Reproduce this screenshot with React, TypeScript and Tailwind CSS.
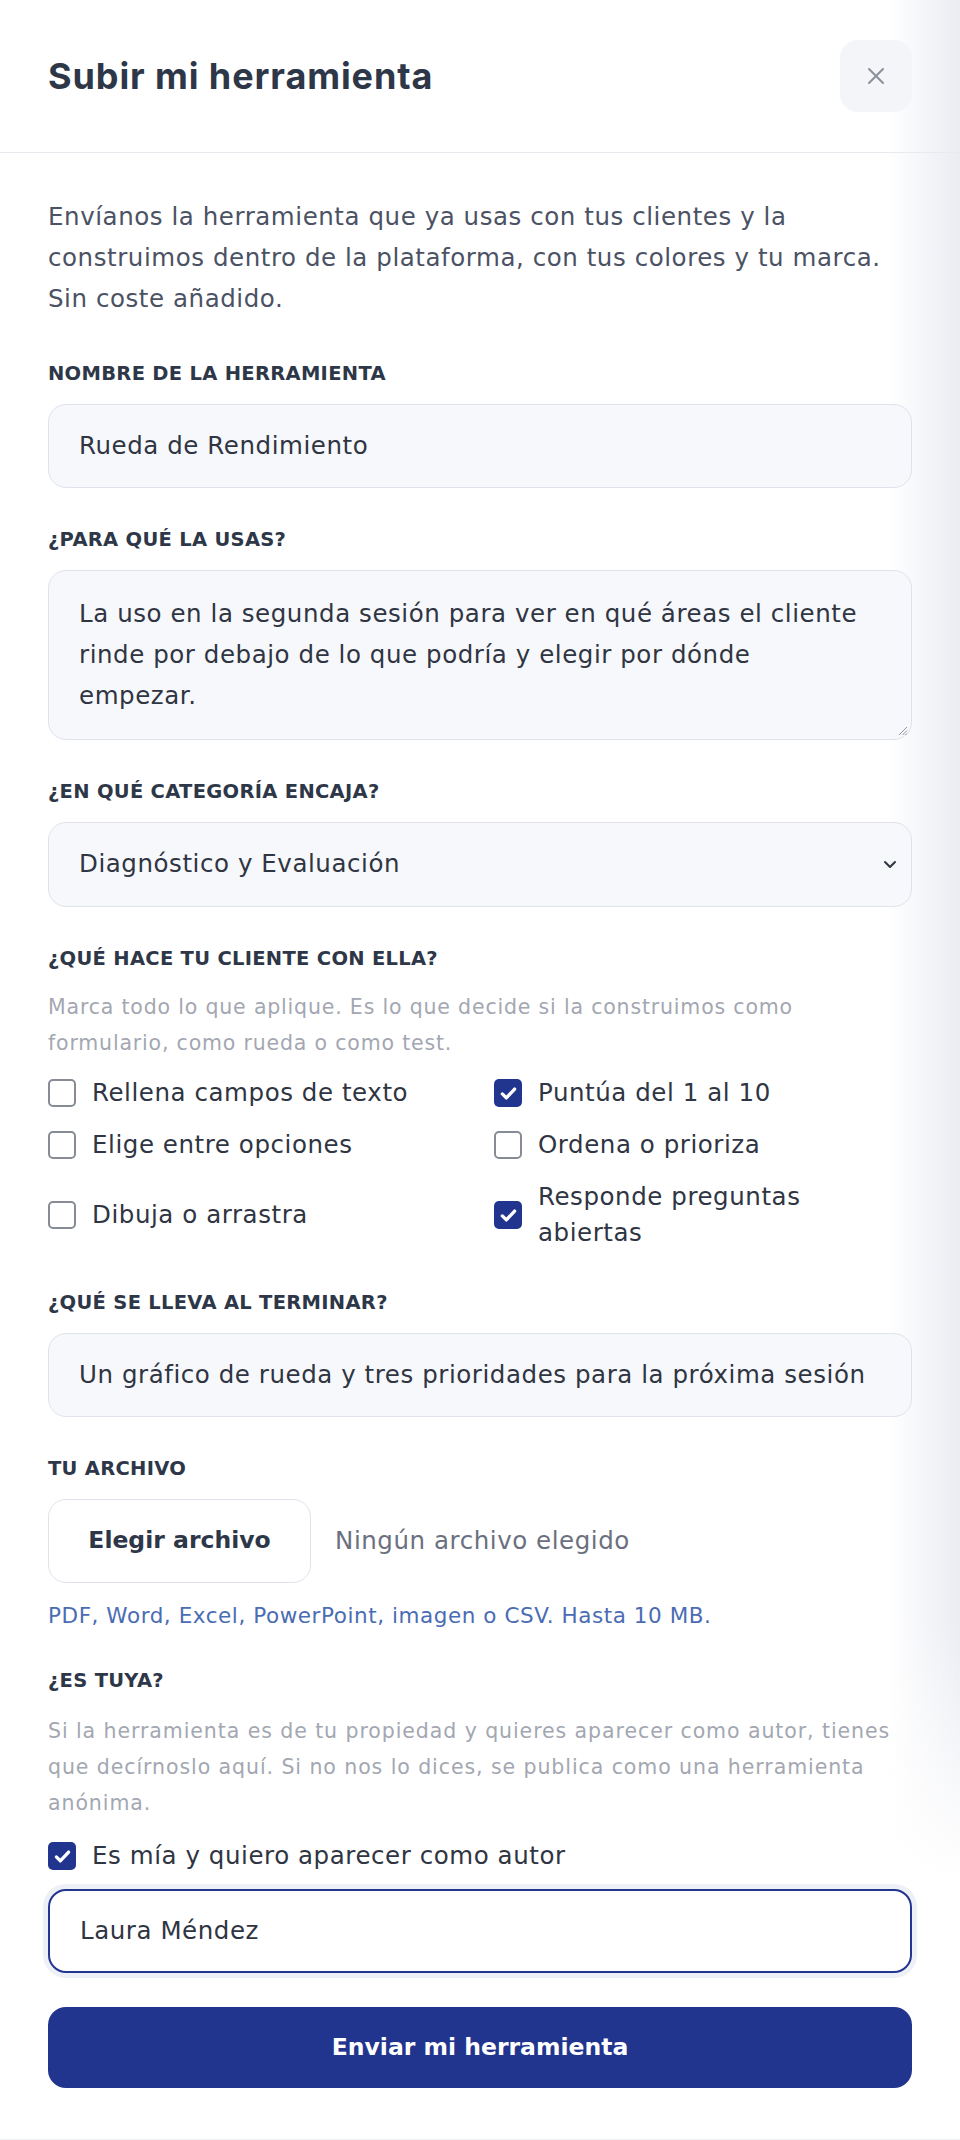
import React from "react";

function Label({ children, className = "" }: { children: React.ReactNode; className?: string }) {
  return (
    <div className={"text-[19.5px] leading-[30px] font-bold uppercase text-[#2d3748] tracking-[0.015em] " + className}>
      {children}
    </div>
  );
}

function Box({ checked }: { checked: boolean }) {
  if (checked) {
    return (
      <span className="flex h-[28px] w-[28px] shrink-0 items-center justify-center rounded-[5px] bg-[#21358e]">
        <svg width="21" height="21" viewBox="0 0 24 24" fill="none" stroke="white" strokeWidth="3.8" strokeLinecap="round" strokeLinejoin="round">
          <path d="M5 12.5l4.5 4.5L19 7" />
        </svg>
      </span>
    );
  }
  return <span className="h-[28px] w-[28px] shrink-0 rounded-[5px] border-2 border-[#868b95] bg-white" />;
}

function Check({ checked, children, narrow = false }: { checked: boolean; children: React.ReactNode; narrow?: boolean }) {
  return (
    <div className="flex items-center gap-[16px]">
      <Box checked={checked} />
      <span className={"text-[24.5px] leading-[36px] text-[#2f3542] " + (narrow ? "max-w-[345px]" : "")}>{children}</span>
    </div>
  );
}

const field =
  "rounded-[18px] border-[1.5px] border-[#e0e2ec] bg-[#f7f8fb] px-[30px] text-[24.5px] text-[#2f3542]";

export default function App() {
  return (
    <div className="relative min-h-[2140px] w-[960px] overflow-hidden bg-white [font-family:'DejaVu_Sans',sans-serif] tracking-[0.035em]">
      {/* right shading */}
      <div className="pointer-events-none absolute right-0 top-0 h-[1880px] w-[72px] bg-linear-to-r from-[#ffffff00] to-[#eaecf2] [mask-image:linear-gradient(to_bottom,black_86%,transparent)]" />
      <div className="absolute bottom-0 left-0 h-px w-full bg-[#f0f1f5]" />

      <header className="relative flex items-center justify-between border-b-[1.5px] border-[#e9eaf0] px-12 py-10">
        <h2 className="[font-family:Inter,sans-serif] text-[36px] font-bold tracking-[0.025em] text-[#2d3748]">
          Subir mi herramienta
        </h2>
        <button className="flex h-[72px] w-[72px] items-center justify-center rounded-[18px] bg-[#f4f5f8]">
          <svg width="20" height="20" viewBox="0 0 20 20" fill="none" stroke="#8a8f99" strokeWidth="2" strokeLinecap="round">
            <path d="M3 3l14 14M17 3L3 17" />
          </svg>
        </button>
      </header>

      <main className="relative px-12 pb-[48px] pt-[43px]">
        <p className="text-[24.5px] leading-[41px] text-[#4b5264]">
          Envíanos la herramienta que ya usas con tus clientes y la construimos dentro de la plataforma, con tus colores y tu marca. Sin coste añadido.
        </p>

        <Label className="mt-[40px]">Nombre de la herramienta</Label>
        <div className={field + " mt-[15px] flex h-[84px] items-center"}>Rueda de Rendimiento</div>

        <Label className="mt-[37px]">¿Para qué la usas?</Label>
        <div className={field + " relative mt-[15px] h-[170px] py-[22px] pr-[44px] leading-[41px]"}>
          La uso en la segunda sesión para ver en qué áreas el cliente rinde por debajo de lo que podría y elegir por dónde empezar.
          <svg className="absolute bottom-[3px] right-[3px]" width="12" height="12" viewBox="0 0 12 12" stroke="#8f939c" strokeWidth="1">
            <path d="M11 3L3 11M11 6.5L6.5 11M11 9.5L9.5 11" />
          </svg>
        </div>

        <Label className="mt-[37px]">¿En qué categoría encaja?</Label>
        <div className={field + " mt-[15px] flex h-[85px] items-center justify-between pr-[14px]"}>
          <span>Diagnóstico y Evaluación</span>
          <svg width="14" height="9" viewBox="0 0 14 9" fill="none" stroke="#2f3542" strokeWidth="2" strokeLinecap="round" strokeLinejoin="round">
            <path d="M2 2l5 5 5-5" />
          </svg>
        </div>

        <Label className="mt-[37px]">¿Qué hace tu cliente con ella?</Label>
        <p className="mt-[15px] text-[20.5px] leading-[36px] tracking-[0.04em] text-[#a3a7b1]">
          Marca todo lo que aplique. Es lo que decide si la construimos como formulario, como rueda o como test.
        </p>
        <div className="mt-[14px] grid grid-cols-2 gap-x-[28px] gap-y-[16px]">
          <Check checked={false}>Rellena campos de texto</Check>
          <Check checked={true}>Puntúa del 1 al 10</Check>
          <Check checked={false}>Elige entre opciones</Check>
          <Check checked={false}>Ordena o prioriza</Check>
          <Check checked={false}>Dibuja o arrastra</Check>
          <Check checked={true} narrow>Responde preguntas abiertas</Check>
        </div>

        <Label className="mt-[37px]">¿Qué se lleva al terminar?</Label>
        <div className={field + " mt-[15px] flex h-[84px] items-center whitespace-nowrap"}>
          Un gráfico de rueda y tres prioridades para la próxima sesión
        </div>

        <Label className="mt-[37px]">Tu archivo</Label>
        <div className="mt-[15px] flex items-center gap-[24px]">
          <button className="flex h-[84px] w-[263px] items-center justify-center rounded-[18px] border-[1.5px] border-[#e0e2ec] bg-white text-[23.5px] font-semibold tracking-normal text-[#2d3748]">
            Elegir archivo
          </button>
          <span className="text-[24.5px] text-[#6b7080]">Ningún archivo elegido</span>
        </div>
        <p className="mt-[17px] text-[21.5px] leading-[32px] text-[#4a6cb3]">
          PDF, Word, Excel, PowerPoint, imagen o CSV. Hasta 10 MB.
        </p>

        <Label className="mt-[34px]">¿Es tuya?</Label>
        <p className="mt-[17px] text-[20.5px] leading-[36px] tracking-[0.045em] text-[#a3a7b1]">
          Si la herramienta es de tu propiedad y quieres aparecer como autor, tienes que decírnoslo aquí. Si no nos lo dices, se publica como una herramienta anónima.
        </p>
        <div className="mt-[17px]">
          <Check checked={true}>Es mía y quiero aparecer como autor</Check>
        </div>
        <div className="mt-[15px] flex h-[84px] items-center rounded-[18px] border-2 border-[#23368f] bg-white px-[30px] text-[24.5px] text-[#2f3542] shadow-[0_0_0_5px_#eef0f7]">
          Laura Méndez
        </div>

        <button className="mt-[34px] flex h-[81px] w-full items-center justify-center rounded-[18px] bg-[#21358e] text-[23.5px] font-semibold tracking-normal text-white">
          Enviar mi herramienta
        </button>
      </main>
    </div>
  );
}
